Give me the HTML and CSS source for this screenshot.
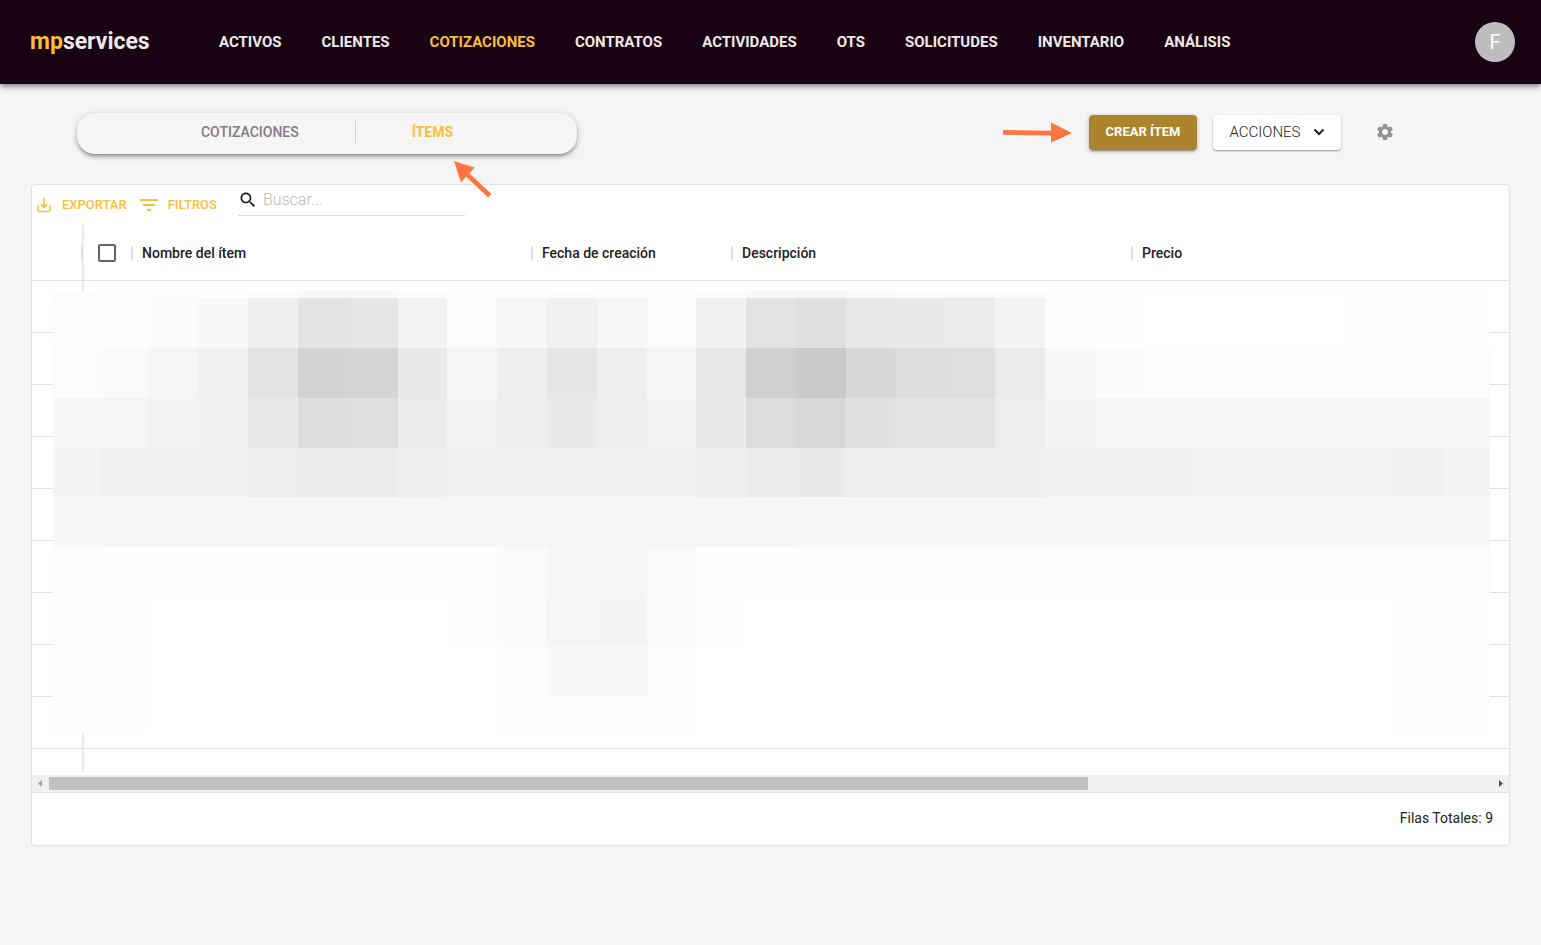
FILE: index.html
```html
<!DOCTYPE html>
<html lang="es">
<head>
<meta charset="utf-8">
<title>mpservices - Ítems</title>
<link rel="stylesheet" href="styles.css">
</head>
<body>
<header class="topbar">
  <a class="logo" href="#"><span class="logo-mark">mp</span>services</a>
  <nav class="nav">
    <a href="#">ACTIVOS</a>
    <a href="#">CLIENTES</a>
    <a href="#" class="active">COTIZACIONES</a>
    <a href="#">CONTRATOS</a>
    <a href="#">ACTIVIDADES</a>
    <a href="#">OTS</a>
    <a href="#">SOLICITUDES</a>
    <a href="#">INVENTARIO</a>
    <a href="#">ANÁLISIS</a>
  </nav>
  <button class="avatar" type="button">F</button>
</header>

<main class="page">
  <div class="page-head">
    <nav class="tabs">
      <a href="#">COTIZACIONES</a>
      <a href="#" class="active">ÍTEMS</a>
      <svg class="tabs-arrow" width="40" height="38" viewBox="0 0 40 38" aria-hidden="true"><path d="M1 1 L21.500 7.500 L16.500 13.500 L38.500 34 L35 37.500 L13 16.500 L8 22.500 Z" fill="#ff7541"/></svg>
    </nav>
    <div class="actions">
      <svg class="hint-arrow" width="70" height="22" viewBox="0 0 70 22" aria-hidden="true"><path d="M1 9 L49 9.700 V1.500 L70 12 L49 21.500 V14.400 L1 13.700 Z" fill="#ff7541"/></svg>
      <button class="btn btn-primary" type="button">CREAR ÍTEM</button>
      <button class="btn btn-menu" type="button">ACCIONES
        <svg width="12" height="8" viewBox="0 0 12 8" aria-hidden="true"><path d="M1.500 1.500 L6 6 L10.500 1.500" fill="none" stroke="#222" stroke-width="2"/></svg>
      </button>
      <button class="btn-gear" type="button" aria-label="Configuración">
        <svg width="20" height="20" viewBox="0 0 24 24" aria-hidden="true"><path fill="#929292" d="M19.140 12.940c.04-.3.06-.61.06-.94 0-.32-.02-.64-.07-.94l2.030-1.580c.18-.14.23-.41.12-.61l-1.920-3.320c-.12-.22-.37-.29-.59-.22l-2.390.96c-.5-.38-1.030-.7-1.620-.94l-.36-2.540c-.04-.24-.24-.41-.48-.41h-3.840c-.24 0-.43.17-.47.41l-.36 2.540c-.59.24-1.130.57-1.620.94l-2.390-.96c-.22-.08-.47 0-.59.22L2.740 8.870c-.12.21-.08.47.12.61l2.030 1.580c-.05.3-.09.63-.09.94s.02.64.07.94l-2.030 1.580c-.18.14-.23.41-.12.61l1.920 3.320c.12.22.37.29.59.22l2.390-.96c.5.38 1.030.7 1.620.94l.36 2.540c.05.24.24.41.48.41h3.840c.24 0 .44-.17.47-.41l.36-2.540c.59-.24 1.130-.56 1.620-.94l2.390.96c.22.08.47 0 .59-.22l1.920-3.320c.12-.22.07-.47-.12-.61l-2.010-1.580zM12 15.600c-1.980 0-3.600-1.620-3.600-3.600s1.620-3.600 3.600-3.600 3.600 1.620 3.600 3.600-1.620 3.600-3.600 3.600z"/></svg>
      </button>
    </div>
  </div>

  <section class="card">
    <div class="toolbar">
      <button class="tool" type="button">
        <svg width="16" height="16" viewBox="0 0 16 16" aria-hidden="true"><path d="M2 8.500 V13.500 Q2 14.500 3 14.500 H13 Q14 14.500 14 13.500 V8.500 M8 1 V10 M4.800 7.200 L8 10.400 L11.200 7.200" fill="none" stroke="#f9be3d" stroke-width="1.600"/></svg>
        EXPORTAR
      </button>
      <button class="tool" type="button">
        <svg width="18" height="12" viewBox="0 0 18 12" aria-hidden="true"><path d="M0 0h18v2H0zM3 5h12v2H3zM7 10h4v2H7z" fill="#f9be3d"/></svg>
        FILTROS
      </button>
      <label class="search">
        <svg width="20" height="20" viewBox="0 0 24 24" aria-hidden="true"><path fill="#1c1c1c" d="M15.500 14h-.79l-.28-.27C15.410 12.590 16 11.110 16 9.500 16 5.910 13.090 3 9.500 3S3 5.910 3 9.500 5.910 16 9.500 16c1.610 0 3.090-.59 4.230-1.570l.27.28v.79l5 4.990L20.490 19l-4.990-5zm-6 0C7.010 14 5 11.990 5 9.500S7.010 5 9.500 5 14 7.010 14 9.500 11.990 14 9.500 14z"/></svg>
        <input type="search" placeholder="Buscar..." aria-label="Buscar">
      </label>
    </div>

    <div class="grid">
      <table class="items">
        <colgroup><col class="c-pin"><col class="c-check"><col class="c-wide"><col class="c-date"><col class="c-wide"><col></colgroup>
        <thead>
          <tr>
            <th></th>
            <th><input class="check" type="checkbox" aria-label="Seleccionar todo"></th>
            <th>Nombre del ítem</th>
            <th>Fecha de creación</th>
            <th>Descripción</th>
            <th>Precio</th>
          </tr>
        </thead>
        <tbody id="rows"></tbody>
      </table>
      <div class="mosaic" id="mosaic" aria-hidden="true"></div>
    </div>

    <div class="scroll" aria-hidden="true">
      <svg width="17" height="17" viewBox="0 0 17 17"><path d="M10 5v7L6 8.500z" fill="#a0a0a0"/></svg>
      <div class="track"><div class="thumb"></div></div>
      <svg width="17" height="17" viewBox="0 0 17 17"><path d="M7 5v7l4-3.500z" fill="#505050"/></svg>
    </div>
    <footer class="foot">Filas Totales: 9</footer>
  </section>
</main>
<script src="app.js"></script>
</body>
</html>
```

FILE: styles.css
```css
* { box-sizing: border-box; }

body {
  margin: 0;
  min-height: 100vh;
  background: #f5f5f5;
  color: #222;
  font: 14px/20px Roboto, "Open Sans", sans-serif;
}

a { color: inherit; text-decoration: none; }

button {
  font: inherit;
  border: 0;
  cursor: pointer;
}

.topbar {
  display: flex;
  align-items: center;
  height: 84px;
  padding: 0 26px 0 30px;
  background: #190211;
  color: #efe9ea;
  box-shadow: 0 2px 4px -1px rgba(0, 0, 0, .3), 0 4px 5px rgba(0, 0, 0, .18), 0 1px 10px rgba(0, 0, 0, .14);
}

.logo {
  width: 189px;
  font-size: 23px;
  font-weight: 700;
}

.logo-mark { color: #f9be3d; }

.nav {
  display: flex;
  gap: 40px;
  font-size: 15px;
  font-weight: 700;
}

.nav .active, .tabs .active { color: #f9be3d; }

.avatar {
  width: 40px;
  height: 40px;
  margin-left: auto;
  padding: 0;
  border-radius: 50%;
  background: #bdbdbd;
  color: #fff;
  font-size: 20px;
}

.page { padding: 29px 31px; }

.page-head {
  display: flex;
  justify-content: space-between;
  align-items: flex-start;
  padding: 0 107px 0 46px;
  margin-bottom: 30px;
}

.tabs {
  position: relative;
  display: flex;
  justify-content: center;
  align-items: flex-start;
  width: 500px;
  height: 41px;
  padding-top: 8px;
  border-radius: 18px;
  color: #827c80;
  font-weight: 500;
  box-shadow: 0 3px 3px -2px rgba(0, 0, 0, .3), 0 3px 4px rgba(0, 0, 0, .2), 0 1px 8px rgba(0, 0, 0, .14);
}

.tabs a {
  padding: 0 56px;
  line-height: 22px;
}

.tabs a + a { border-left: 1px solid #d0d0d0; font-weight: 700; }

.tabs-arrow {
  position: absolute;
  left: 376px;
  top: 47px;
}

.actions {
  display: flex;
  align-items: center;
  padding-top: 1px;
}

.hint-arrow { margin-right: 17px; }

.btn {
  display: flex;
  align-items: center;
  justify-content: center;
  gap: 12px;
  height: 35px;
  margin-right: 16px;
  border-radius: 4px;
}

.btn-primary {
  width: 108px;
  padding: 0;
  background: #ac842d;
  color: #fff;
  font-size: 13px;
  font-weight: 700;
  box-shadow: 0 3px 1px -2px rgba(0, 0, 0, .2), 0 2px 2px rgba(0, 0, 0, .14), 0 1px 5px rgba(0, 0, 0, .2);
}

.btn-menu {
  width: 128px;
  padding: 0;
  background: #fff;
  color: #222;
  font-size: 15px;
  font-weight: 300;
  box-shadow: 0 1px 2px rgba(0, 0, 0, .4);
}

.btn-gear {
  display: flex;
  padding: 8px;
  margin-left: 10px;
  background: none;
}

.card {
  background: #fff;
  border: 1px solid #e0e0e0;
  border-radius: 4px;
}

.toolbar {
  display: flex;
  align-items: flex-start;
  height: 40px;
  padding: 0 4px;
}

.tool {
  display: flex;
  align-items: center;
  gap: 10px;
  margin-right: 13px;
  padding: 10px 0 0;
  background: none;
  color: #f9be3d;
  font-size: 13px;
  font-weight: 500;
}

.search {
  display: flex;
  align-items: center;
  gap: 5px;
  width: 227px;
  height: 31px;
  margin-left: 8px;
  border-bottom: 1px solid #dcdcdc;
}

.search input {
  flex: 1;
  min-width: 0;
  padding: 0;
  border: 0;
  outline: 0;
  background: none;
  font: inherit;
  font-size: 16px;
  font-weight: 300;
}

.search input::placeholder { color: #b8b8b8; }

.grid { position: relative; padding-bottom: 26px; }

/* pinned column edge */
.grid::before {
  content: "";
  position: absolute;
  left: 50px;
  top: 0;
  bottom: 3px;
  width: 1px;
  background: #e2e2e2;
  box-shadow: 1px 0 1px rgba(0, 0, 0, .06);
}

.items {
  width: 100%;
  table-layout: fixed;
  border-collapse: separate;
  border-spacing: 0;
}

.c-pin, .c-check { width: 50px; }
.c-wide { width: 400px; }
.c-date { width: 200px; }

.items th {
  position: relative;
  height: 56px;
  padding: 0 10px;
  border-bottom: 1px solid #e0e0e0;
  text-align: left;
  font-weight: 500;
}

.items th:not(:last-child)::after {
  content: "";
  position: absolute;
  right: -1px;
  top: 21px;
  width: 2px;
  height: 14px;
  background: #e0e0e0;
}

.items th:nth-child(2) { padding: 0 16px; }

.items td {
  height: 52px;
  padding: 0;
  border-bottom: 1px solid #e0e0e0;
}

.check {
  appearance: none;
  display: block;
  width: 18px;
  height: 18px;
  margin: 0;
  border: 2px solid #666;
  border-radius: 2px;
}

.mosaic {
  position: absolute;
  left: 21px;
  right: 19px;
  top: 66px;
  display: grid;
  grid-template-columns: 46fr repeat(27, 50fr) 47fr;
  grid-template-rows: 7px 50px 50px 50px 49px 50px 49px 49px 51px 38px;
}

.scroll {
  display: flex;
  height: 17px;
  background: #f0f0f0;
}

.track { flex: 1; padding: 2px 0; }

.thumb {
  width: 72%;
  height: 13px;
  background: #c1c1c1;
}

.foot {
  padding: 15px 16px 17px;
  border-top: 1px solid #e0e0e0;
  text-align: right;
}
```

FILE: app.js
```js
// Nine item rows, six columns each
document.getElementById("rows").innerHTML =
  ("<tr>" + "<td></td>".repeat(6) + "</tr>").repeat(9);

// Grey levels of the privacy mosaic that covers the row contents
const levels = [
  "fc fd fd fd fb f8 f8 fc fd fd fc fd fd fb f8 f7 f9 fa fa fb fe fe fe fe fe fe fe fd fd",
  "fd fd fb f8 ef e4 e6 f2 fc f7 f1 f7 fc f1 e3 e0 e8 ea eb f4 fc fe ff ff ff ff fe fd fd",
  "fc fa f5 f1 e4 d3 d5 e9 f5 ef e7 ef f5 e8 d0 ca d7 dc de eb f7 fb fd fd fd fd fd fc fc",
  "f7 f5 f2 f0 e8 dd df eb f3 ee ea ee f3 ea dc d9 e0 e3 e4 ed f4 f5 f7 f7 f7 f7 f7 f6 f7",
  "f4 f1 f1 f0 ee ec ec ef f1 f0 f0 f0 f1 ef ec ea ed ed ed ef f1 f1 f1 f2 f2 f2 f2 f0 f3",
  "f8 f6 f6 f6 f6 f6 f6 f6 f6 f6 f5 f5 f6 f6 f6 f7 f7 f7 f7 f7 f7 f7 f7 f7 f7 f7 f7 f6 f7",
  "fd fd fd fd fd fd fd fd fd fb f7 f6 fb fd fd fd fd fd fd fd fd fd fd fd fd fd fd fc fc",
  "fd fe ff ff ff ff ff ff fe fb f5 f4 fa fe ff ff ff ff ff ff ff ff ff ff ff ff ff fe fd",
  "fd fe ff ff ff ff ff ff ff fd f8 f8 fc ff ff ff ff ff ff ff ff ff ff ff ff ff ff fe fd",
  "fd fe ff ff ff ff ff ff ff fe fe fe fe ff ff ff ff ff ff ff ff ff ff ff ff ff ff fe fd"
];
document.getElementById("mosaic").innerHTML = levels
  .flatMap(row => row.split(" "))
  .map(v => `<div style="background:#${v}${v}${v}"></div>`)
  .join("");
```
